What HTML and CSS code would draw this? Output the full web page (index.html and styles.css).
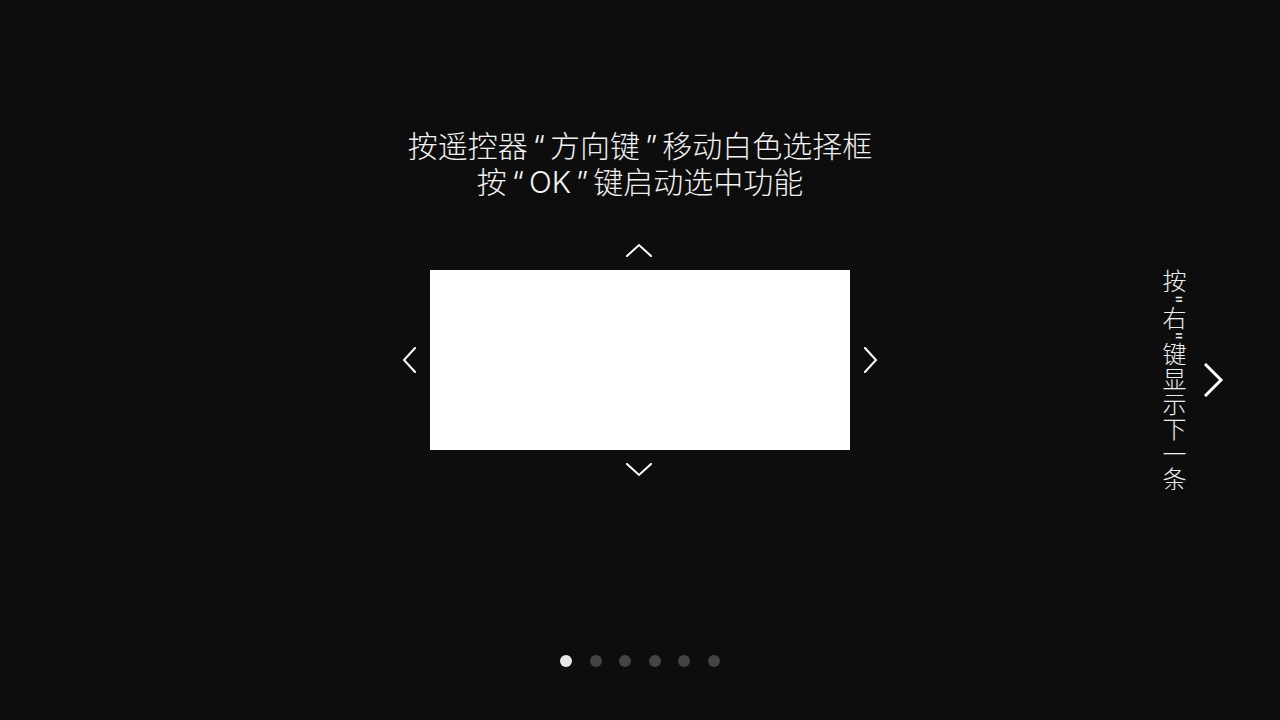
FILE: index.html
```html
<!DOCTYPE html>
<html lang="zh-CN">
<head>
  <meta charset="UTF-8" />
  <meta name="viewport" content="width=device-width, initial-scale=1.0" />
  <title>操作指引</title>
  <link rel="stylesheet" href="styles.css">
</head>
<body>
  <div class="guide">
    <div class="tip">
      <div>按遥控器<span class="q">“</span>方向键<span class="q">”</span>移动白色选择框</div>
      <div>按<span class="q">“</span>OK<span class="q">”</span>键启动选中功能</div>
    </div>

    <div class="stage">
      <svg class="arrow arrow-up" viewBox="0 0 26 14"><path d="M1 13 L13 2 L25 13" /></svg>
      <div class="stage-row">
        <svg class="arrow arrow-side" viewBox="0 0 14 26"><path d="M13 1 L2 13 L13 25" /></svg>
        <div class="select-box"></div>
        <svg class="arrow arrow-side" viewBox="0 0 14 26"><path d="M1 1 L12 13 L1 25" /></svg>
      </div>
      <svg class="arrow arrow-down" viewBox="0 0 26 14"><path d="M1 1 L13 12 L25 1" /></svg>
    </div>

    <div class="dots">
      <span class="dot active"></span>
      <span class="dot"></span>
      <span class="dot"></span>
      <span class="dot"></span>
      <span class="dot"></span>
      <span class="dot"></span>
    </div>
  </div>

  <div class="next-hint">
    <div class="next-text">按"右"键显示下一条</div>
    <svg class="next-arrow" viewBox="0 0 20 34"><path d="M2 2 L17 17 L2 32" /></svg>
  </div>
</body>
</html>
```
FILE: styles.css
```css
* {
  margin: 0;
  padding: 0;
  box-sizing: border-box;
}

body {
  width: 1280px;
  height: 720px;
  background: #0d0d0d;
  color: #fff;
  font-family: Inter, "Noto Sans CJK SC", sans-serif;
  overflow: hidden;
  position: relative;
}

.guide {
  display: flex;
  flex-direction: column;
  align-items: center;
  height: 100%;
  padding-top: 128px;
}

.tip {
  font-size: 30px;
  font-weight: 300;
  line-height: 36px;
  text-align: center;
  color: #f2f2f2;
}

.tip .q {
  margin: 0 5px;
}

.stage {
  display: flex;
  flex-direction: column;
  align-items: center;
  margin-top: 43px;
}

.stage-row {
  display: flex;
  align-items: center;
  gap: 14px;
  margin: 13px 0;
}

.select-box {
  width: 420px;
  height: 180px;
  background: #fff;
}

.arrow path,
.next-arrow path {
  fill: none;
  stroke: #fff;
  stroke-width: 2;
  stroke-linecap: square;
}

.arrow-up,
.arrow-down {
  width: 26px;
  height: 14px;
  margin-left: -2px;
}

.arrow-side {
  width: 14px;
  height: 26px;
}

.dots {
  display: flex;
  gap: 17.6px;
  margin-top: auto;
  margin-bottom: 53px;
}

.dot {
  width: 12px;
  height: 12px;
  border-radius: 50%;
  background: #444;
}

.dot.active {
  background: #e8e8e8;
}

/* 右侧提示 */
.next-hint {
  position: absolute;
  left: 1159px;
  top: 269px;
  display: flex;
  align-items: flex-start;
  gap: 19px;
}

.next-text {
  writing-mode: vertical-rl;
  font-size: 24px;
  font-weight: 300;
  line-height: 26px;
  letter-spacing: 1px;
  color: #eee;
}

.next-arrow {
  width: 20px;
  height: 34px;
  margin-top: 94px;
}

.next-arrow path {
  stroke-width: 3;
}
```
